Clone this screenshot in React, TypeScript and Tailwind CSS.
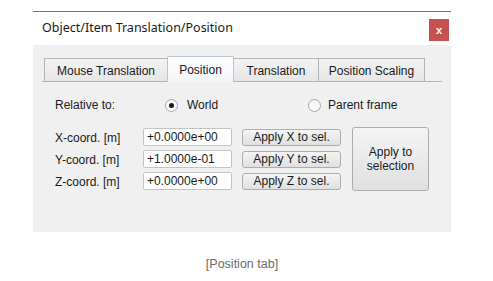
import React from 'react';

const ui = { fontFamily: '"Liberation Sans", Arial, sans-serif' };

function Tab({ label, width, active }: { label: string; width: string; active?: boolean }) {
  if (active) {
    return (
      <div
        className={`${width} relative z-10 -ml-px -mb-px h-[26px] flex items-center justify-center border border-b-0 border-[#b9c6d6] bg-gradient-to-b from-[#fdfdfe] to-[#f3f6fa] rounded-t-[2px] text-[12px] text-[#1a1a1a]`}
      >
        {label}
      </div>
    );
  }
  return (
    <div
      className={`${width} -ml-px first:ml-0 h-[23px] pt-[2px] flex items-center justify-center border border-b-0 border-[#b4b4b4] bg-gradient-to-b from-[#f3f3f3] to-[#e6e6e6] text-[12px] text-[#1a1a1a]`}
    >
      {label}
    </div>
  );
}

function Radio({ checked }: { checked?: boolean }) {
  return (
    <div className="w-[13px] h-[13px] rounded-full border border-[#a8a8a8] bg-gradient-to-b from-[#f4f4f4] to-white flex items-center justify-center">
      {checked && <div className="w-[5px] h-[5px] rounded-full bg-[#1a1a1a]" />}
    </div>
  );
}

function Btn({ children, className }: { children: React.ReactNode; className: string }) {
  return (
    <div
      className={`${className} flex items-center justify-center text-center border border-[#adadad] rounded-[3px] bg-gradient-to-b from-[#f4f4f4] to-[#e0e0e0] text-[12px] leading-[14px] text-[#1a1a1a]`}
    >
      {children}
    </div>
  );
}

const rows = [
  { label: 'X-coord. [m]', value: '+0.0000e+00', btn: 'Apply X to sel.' },
  { label: 'Y-coord. [m]', value: '+1.0000e-01', btn: 'Apply Y to sel.' },
  { label: 'Z-coord. [m]', value: '+0.0000e+00', btn: 'Apply Z to sel.' },
];

export default function App() {
  return (
    <div className="w-[493px] h-[281px] bg-white pt-[11px] pl-[33px]" style={ui}>
      <div className="w-[418px]">
        <div className="h-px bg-[#2f87d8]" />
        {/* Title bar */}
        <div className="h-[33px] bg-white flex items-start justify-between pl-[9px] pr-[2px]">
          <span
            className="mt-[7px] text-[12.5px] leading-[18px] text-[#1a1a1a]"
            style={{ fontFamily: '"Noto Sans", "Open Sans", sans-serif' }}
          >
            Object/Item Translation/Position
          </span>
          <div className="mt-[7px] w-[20px] h-[22px] bg-[#c75050] flex items-center justify-center text-white text-[11px] font-bold leading-none">
            x
          </div>
        </div>

        {/* Body */}
        <div className="h-[187px] bg-[#f0f0f0] pt-[11px]">
          <div className="ml-[9px] w-[400px] h-[26px] border-b border-[#b4b4b4] pl-[2px] flex items-end">
            <Tab label="Mouse Translation" width="w-[124px]" />
            <Tab label="Position" width="w-[67px]" active />
            <Tab label="Translation" width="w-[86px]" />
            <Tab label="Position Scaling" width="w-[107px]" />
          </div>

          <div className="mt-[15px] ml-[22px] h-[16px] flex items-center text-[12px] text-[#1a1a1a]">
            <span className="w-[110px]">Relative to:</span>
            <div className="w-[143px] flex items-center gap-[9px]">
              <Radio checked />
              <span>World</span>
            </div>
            <div className="flex items-center gap-[7px]">
              <Radio />
              <span>Parent frame</span>
            </div>
          </div>

          <div className="mt-[15px] ml-[22px] flex items-start">
            <div className="flex flex-col gap-[4px]">
              {rows.map((r) => (
                <div key={r.label} className="h-[18px] flex items-center text-[12px] text-[#1a1a1a]">
                  <span className="w-[88px] pt-px">{r.label}</span>
                  <div className="w-[89px] h-[18px] bg-white border border-[#c4c4c4] rounded-[2px] pl-[3px] flex items-center">
                    {r.value}
                  </div>
                  <Btn className="ml-[10px] w-[99px] h-[17px]">{r.btn}</Btn>
                </div>
              ))}
            </div>
            <Btn className="ml-[11px] -mt-px w-[77px] h-[64px]">
              Apply to
              <br />
              selection
            </Btn>
          </div>
        </div>

        <div className="mt-[25px] text-center text-[12.5px] leading-[14px] text-[#6b6b6b]">[Position tab]</div>
      </div>
    </div>
  );
}
